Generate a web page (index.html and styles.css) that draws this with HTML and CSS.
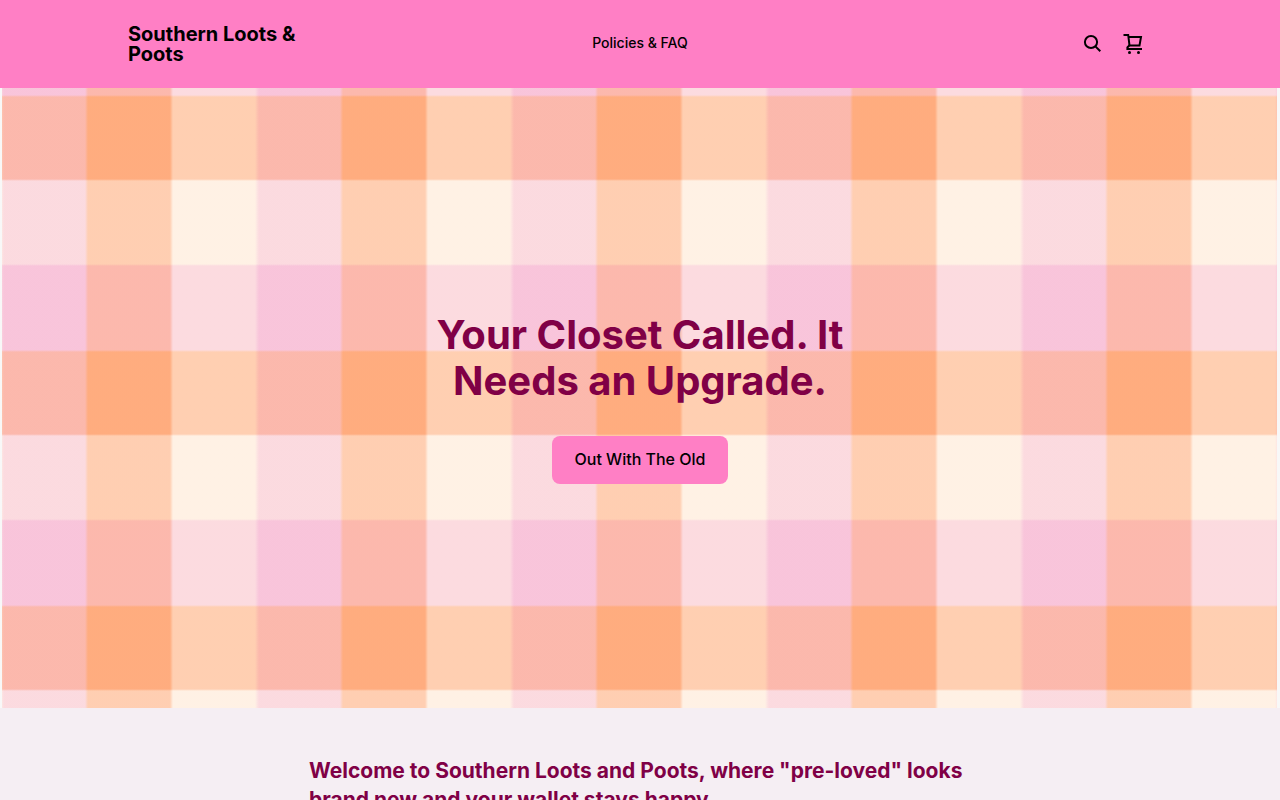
FILE: index.html
```html
<!DOCTYPE html>
<html lang="en">
<head>
  <meta charset="utf-8">
  <meta name="viewport" content="width=device-width, initial-scale=1">
  <title>Southern Loots &amp; Poots</title>
  <link rel="stylesheet" href="styles.css">
</head>
<body>

<header class="header">
  <a class="logo" href="#">Southern Loots &amp; Poots</a>

  <nav class="nav">
    <a href="#">Policies &amp; FAQ</a>
  </nav>

  <div class="actions">
    <button class="icon-button" type="button" aria-label="Search">
      <svg width="24" height="24" viewBox="0 0 24 24" fill="none" stroke="currentColor" stroke-width="2">
        <circle cx="11" cy="10" r="6.1"/>
        <path d="M15.4 14.4L20.3 19.3"/>
      </svg>
    </button>
    <button class="icon-button" type="button" aria-label="Cart">
      <svg width="24" height="24" viewBox="0 0 24 24" fill="none" stroke="currentColor" stroke-width="2">
        <path d="M3.5 3h4.7l1.3 10.5h10L21 5H8.4"/>
        <path d="M9.5 13.2L7.4 15.5V17H22"/>
        <circle cx="9.5" cy="20.5" r="1.5" fill="currentColor" stroke="none"/>
        <circle cx="18.5" cy="20.5" r="1.5" fill="currentColor" stroke="none"/>
      </svg>
    </button>
  </div>
</header>

<main>
  <section class="hero">
    <h1 class="hero-title">Your Closet Called. It Needs an Upgrade.</h1>
    <a class="hero-button" href="#">Out With The Old</a>
  </section>

  <section class="intro">
    <h2 class="intro-title">Welcome to Southern Loots and Poots, where "pre-loved" looks brand new and your wallet stays happy.</h2>
  </section>
</main>

</body>
</html>
```
FILE: styles.css
```css
* {
  box-sizing: border-box;
}

body {
  margin: 0;
  font-family: Inter, "Liberation Sans", sans-serif;
  background-color: #f5eef3;
  color: #000;
}

a {
  color: inherit;
  text-decoration: none;
}

/* Header */
.header {
  display: grid;
  grid-template-columns: 1fr auto 1fr;
  align-items: center;
  min-height: 88px;
  padding: 24px 10%;
  background-color: #ff7fc5;
}

.logo {
  max-width: 200px;
  font-size: 20px;
  font-weight: 700;
  line-height: 20px;
}

.nav {
  padding-bottom: 2px;
  font-size: 14px;
  font-weight: 500;
  line-height: 20px;
}

.actions {
  display: flex;
  justify-content: flex-end;
}

.icon-button {
  display: flex;
  align-items: center;
  justify-content: center;
  width: 40px;
  height: 40px;
  padding: 0;
  border: 0;
  background: none;
  color: #000;
  cursor: pointer;
}

/* Hero: see-through vertical stripes over solid horizontal ones make the plaid */
.hero {
  display: flex;
  flex-direction: column;
  align-items: center;
  justify-content: center;
  gap: 32px;
  min-height: 620px;
  padding: 48px 24px;
  background-image:
    linear-gradient(90deg,
      rgba(251, 218, 224, 0.5) 0, rgba(248, 196, 218, 0.5) 2px,
      rgba(248, 196, 218, 0.5) 83px, rgba(255, 172, 127, 0.5) 86px,
      rgba(255, 172, 127, 0.5) 168px, rgba(255, 241, 228, 0.5) 171px,
      rgba(255, 241, 228, 0.5) 253px, rgba(251, 218, 224, 0.5) 255px),
    linear-gradient(180deg,
      #fbdae0 0, #f8c4da 1px,
      #f8c4da 85px, #ffac7f 87px,
      #ffac7f 169px, #fff1e4 171px,
      #fff1e4 254px, #fbdae0 255px);
  background-size: 255px 255px;
  background-position: 2px -78px;
  box-shadow: inset 2px 0 #f8f8f8, inset -3px 0 #f8f8f8;
}

.hero-title {
  max-width: 460px;
  margin: 0;
  font-size: 40px;
  font-weight: 700;
  line-height: 46px;
  text-align: center;
  color: #800046;
}

.hero-button {
  padding: 11px 23px 13px;
  border-radius: 8px;
  background-color: #ff7fc5;
  font-size: 16px;
  font-weight: 500;
  line-height: 24px;
}

/* Intro */
.intro {
  padding: 48px 24px;
}

.intro-title {
  max-width: 662px;
  margin: 0 auto;
  font-size: 21px;
  font-weight: 700;
  line-height: 29px;
  color: #800046;
}
```
